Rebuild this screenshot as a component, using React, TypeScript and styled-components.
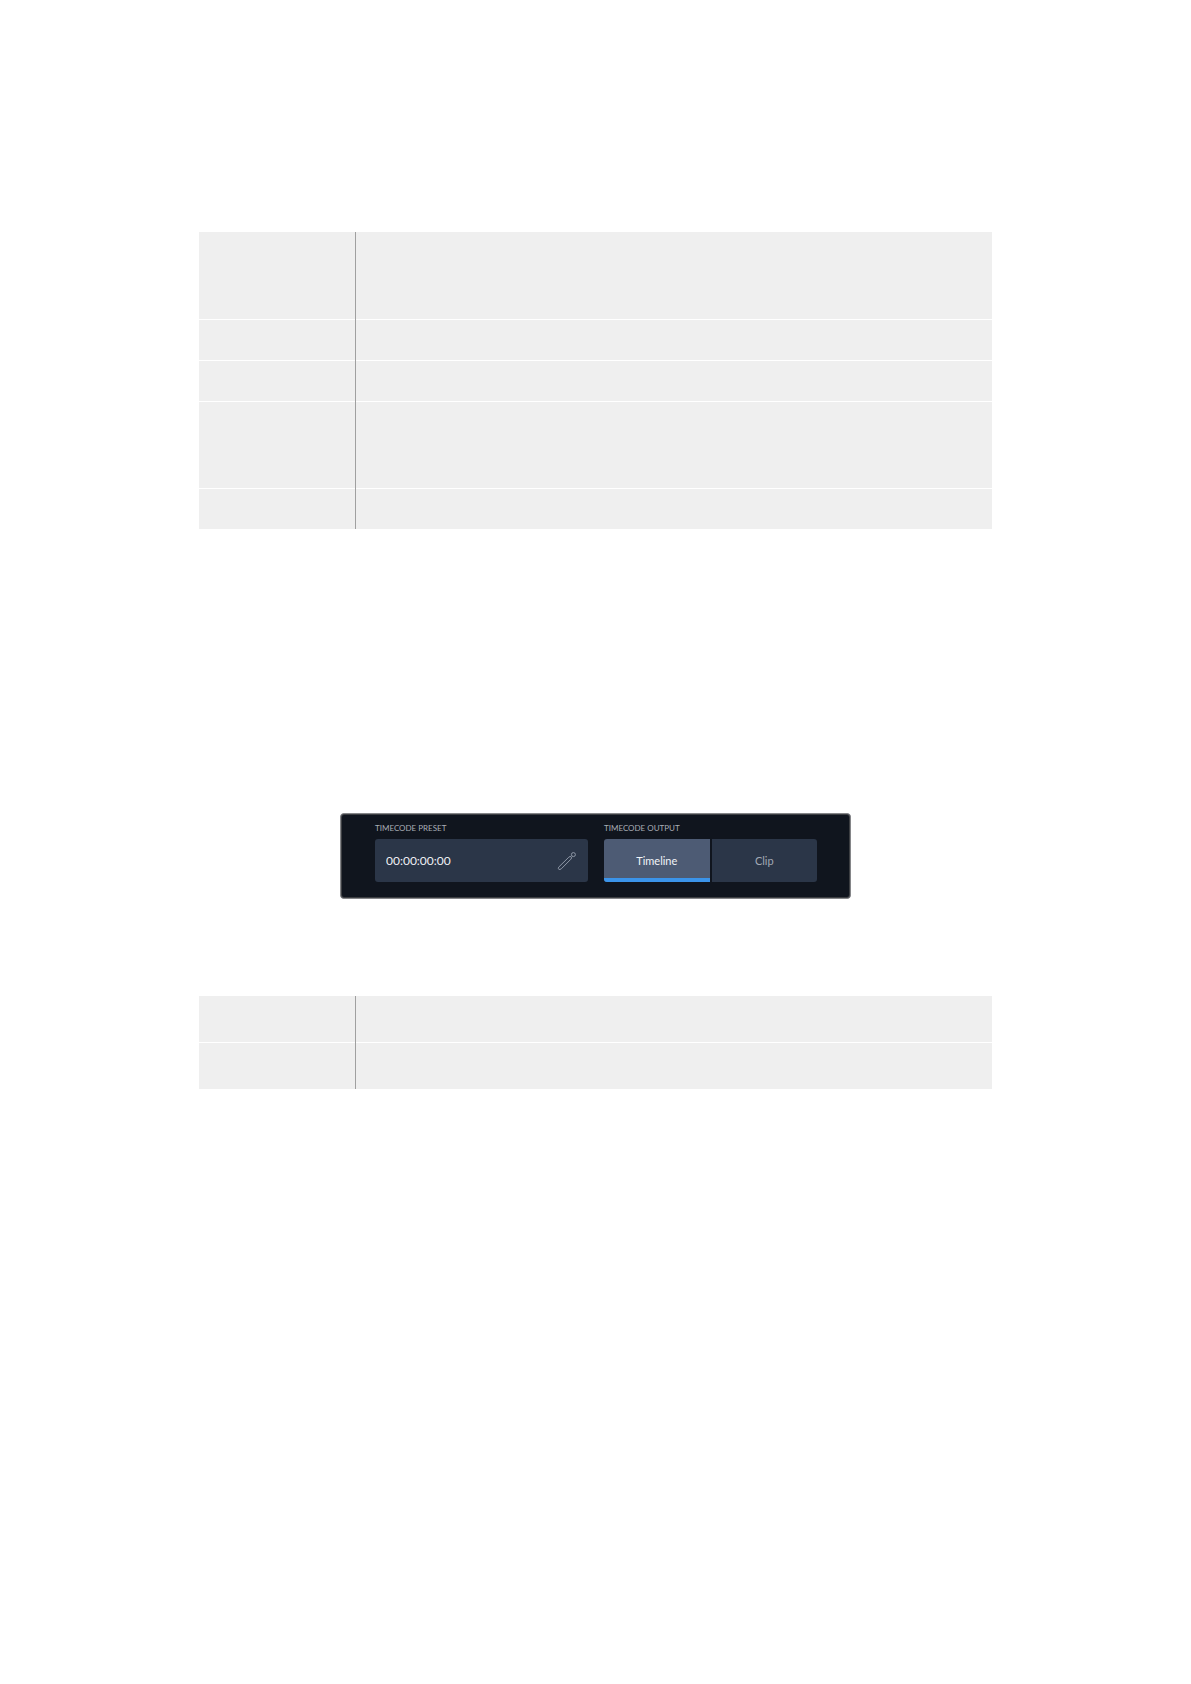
import React, { useState } from "react";
import styled, { createGlobalStyle } from "styled-components";

const GlobalStyle = createGlobalStyle`
  *, *::before, *::after { box-sizing: border-box; }
  body {
    margin: 0;
    background: #ffffff;
    font-family: Lato, "Liberation Sans", sans-serif;
  }
`;

const Page = styled.main`
  max-width: 793px;
  min-height: 100vh;
  margin: 0 auto;
  padding: 232px 0 80px;
`;

const SettingsTable = styled.table`
  width: 100%;
  border-collapse: collapse;
  table-layout: fixed;
  background: #efefef;
`;

const SettingsRow = styled.tr<{ $height: number }>`
  height: ${(p) => p.$height}px;
  & + & {
    background: linear-gradient(#ffffff, #ffffff) 0 0 / 100% 1px no-repeat;
  }
`;

const NameCell = styled.th`
  width: 157px;
  padding: 0;
  background: linear-gradient(#a0a0a0, #a0a0a0) 100% 0 / 1px 100% no-repeat;
`;

const DetailCell = styled.td`
  padding: 0;
`;

const Panel = styled.section`
  display: grid;
  grid-template-columns: 1fr 1fr;
  gap: 16px;
  max-width: 511px;
  margin: 284px auto 97px;
  padding: 9px 33px 16px 34px;
  border: 1px solid #858689;
  border-radius: 4px;
  background: #10151e;
  box-shadow: inset 0 0 0 1px #3c3e42;
`;

const Group = styled.div`
  display: flex;
  flex-direction: column;
  gap: 6px;
  min-width: 0;
`;

const Caption = styled.label`
  font-size: 8px;
  line-height: 10px;
  color: #a9adb5;
  text-transform: uppercase;
  white-space: nowrap;
`;

const Field = styled.div`
  display: flex;
  align-items: center;
  height: 43px;
  padding: 0 11px;
  border-radius: 3px;
  background: #2b3648;
`;

const TimecodeInput = styled.input`
  flex: 1;
  min-width: 0;
  padding: 0;
  border: 0;
  outline: 0;
  background: transparent;
  color: #eef1f5;
  font-family: inherit;
  font-size: 12px;
  line-height: 16px;
`;

const EditButton = styled.button`
  display: flex;
  padding: 0;
  border: 0;
  background: transparent;
  color: #8f98a7;
  cursor: pointer;
`;

const Segments = styled.div`
  display: grid;
  grid-template-columns: 1fr 1fr;
  gap: 2px;
  height: 43px;
  border-radius: 3px;
  overflow: hidden;
`;

const Segment = styled.button<{ $active: boolean }>`
  padding: 0;
  border: 0;
  background: ${(p) => (p.$active ? "#4d5b74" : "#2b3648")};
  box-shadow: ${(p) => (p.$active ? "inset 0 -4px #3b94ea" : "none")};
  color: ${(p) => (p.$active ? "#f1f4f8" : "#a2a9b5")};
  font-family: inherit;
  font-size: 11px;
  line-height: 16px;
  cursor: pointer;
`;

function Settings({ heights, label }: { heights: number[]; label: string }) {
  return (
    <SettingsTable aria-label={label}>
      <tbody>
        {heights.map((height, i) => (
          <SettingsRow key={i} $height={height}>
            <NameCell scope="row" />
            <DetailCell />
          </SettingsRow>
        ))}
      </tbody>
    </SettingsTable>
  );
}

function PencilIcon() {
  return (
    <svg width="20" height="20" viewBox="0 0 20 20" fill="none" stroke="currentColor" strokeWidth="1" aria-hidden="true">
      <path d="M1.6 16.2 11.8 6.2Q13.2 4.9 14.2 5.8 15.1 6.8 13.9 8.2L4.3 17.8Q2.9 18.9 1.8 18.3 0.9 17.5 1.6 16.2Z" />
      <circle cx="16.4" cy="3.6" r="2" />
    </svg>
  );
}

export default function App() {
  const [timecode, setTimecode] = useState("00:00:00:00");
  const [output, setOutput] = useState("Timeline");

  return (
    <>
      <GlobalStyle />
      <Page>
        <Settings label="Settings" heights={[87, 41, 41, 87, 41]} />
        <Panel>
          <Group>
            <Caption htmlFor="timecode">Timecode preset</Caption>
            <Field>
              <TimecodeInput id="timecode" value={timecode} onChange={(e) => setTimecode(e.target.value)} />
              <EditButton type="button" aria-label="Edit timecode">
                <PencilIcon />
              </EditButton>
            </Field>
          </Group>
          <Group>
            <Caption as="span" id="output">Timecode output</Caption>
            <Segments role="group" aria-labelledby="output">
              {["Timeline", "Clip"].map((name) => (
                <Segment
                  key={name}
                  type="button"
                  $active={output === name}
                  aria-pressed={output === name}
                  onClick={() => setOutput(name)}
                >
                  {name}
                </Segment>
              ))}
            </Segments>
          </Group>
        </Panel>
        <Settings label="Timecode output" heights={[46, 47]} />
      </Page>
    </>
  );
}
